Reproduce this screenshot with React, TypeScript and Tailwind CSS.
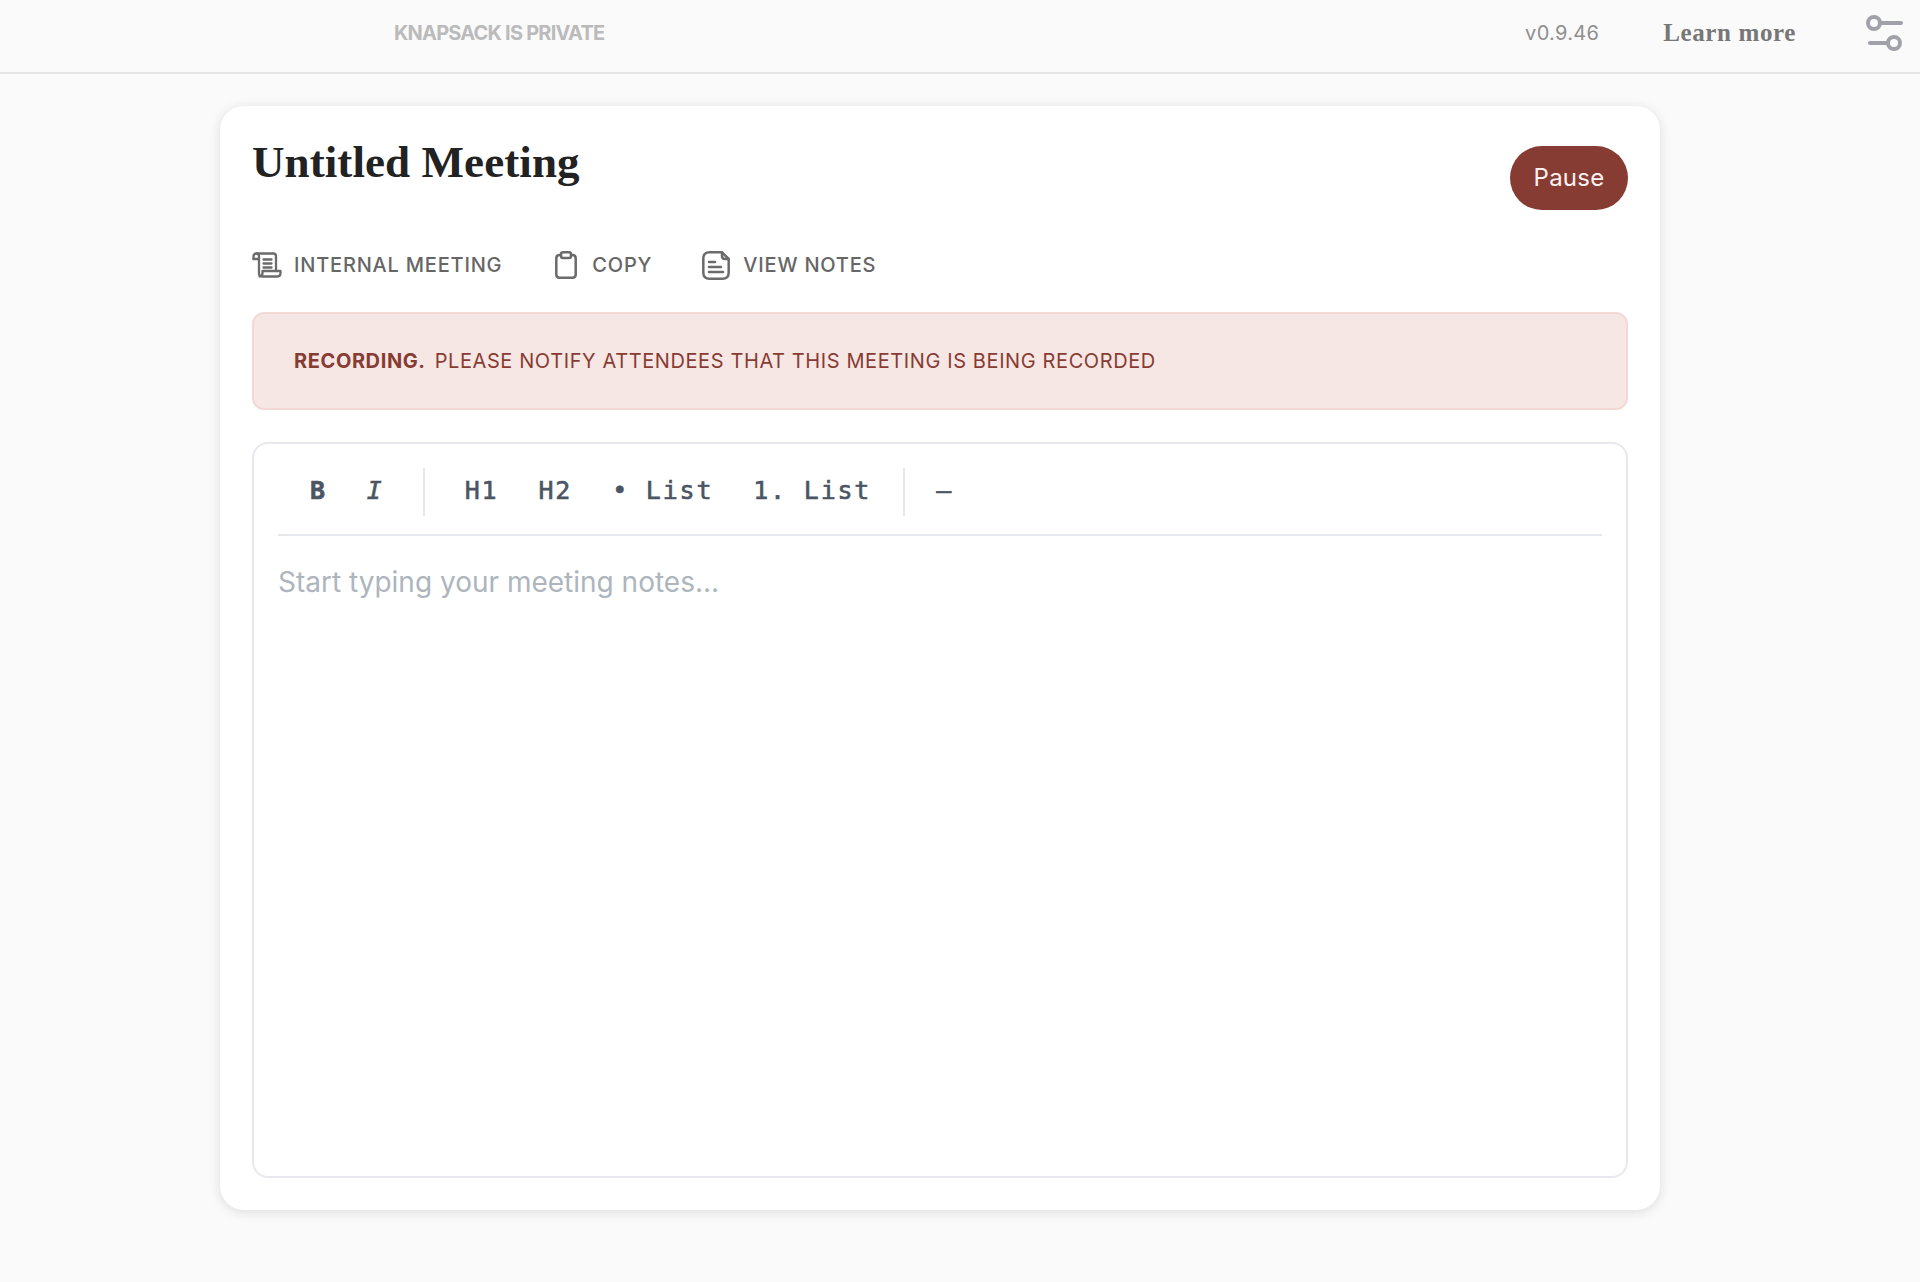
import type { ReactNode } from 'react'

const INTER = "font-['Inter',sans-serif]"

function ScrollIcon() {
  return (
    <svg width="30" height="26" viewBox="0 0 30 26" fill="none" stroke="#6b6b6b" strokeWidth="2.3" strokeLinecap="round" strokeLinejoin="round">
      <path d="M1.500 7V4.500c0-2 1-3 3-3h17c2 0 2.500 1.500 2.500 3v13.500" />
      <path d="M4.500 1.500c1.800 0 2.500 1.200 2.500 3v17c0 2 1.500 3 3.500 3h15c2 0 3-1.500 3-3.500v-2h-18v2c0 2-1 3.500-3 3.500" />
      <path d="M1.500 7h5" />
      <path d="M11.500 7.500h8M11.500 11.500h8M11.500 15.500h8" />
    </svg>
  )
}

function ClipboardIcon() {
  return (
    <svg width="22" height="28" viewBox="0 0 22 28" fill="none" stroke="#6b6b6b" strokeWidth="2.5" strokeLinecap="round" strokeLinejoin="round">
      <path d="M6 4H4.500C2.500 4 1.300 5.300 1.300 7.500v16c0 2 1.200 3.200 3.200 3.200h13c2 0 3.200-1.200 3.200-3.200v-16c0-2.200-1.200-3.500-3.200-3.500H16" />
      <rect x="6" y="1.300" width="10" height="5.700" rx="2" />
    </svg>
  )
}

function NoteIcon() {
  return (
    <svg width="28" height="29" viewBox="0 0 28 29" fill="none" stroke="#6b6b6b" strokeWidth="2.5" strokeLinecap="round" strokeLinejoin="round">
      <path d="M20 1.300H7.500C3.500 1.300 1.300 3.500 1.300 7.500v14c0 4 2.200 6.200 6.200 6.200h13c4 0 6.200-2.200 6.200-6.200V8z" />
      <path d="M20 1.300v3.700c0 2 1 3 3 3h3.700" />
      <path d="M7 11h6M7 16h12M7 21h14" />
    </svg>
  )
}

function SettingsIcon() {
  return (
    <svg width="38" height="38" viewBox="0 0 38 38" fill="none" stroke="#a1a1aa" strokeWidth="4" strokeLinecap="round">
      <circle cx="9" cy="9" r="6" />
      <path d="M15 9h21" />
      <circle cx="29" cy="29" r="6" />
      <path d="M23 29H5" />
    </svg>
  )
}

function MetaItem({ icon, label, textGap = 'gap-[12px]' }: { icon: ReactNode; label: string; textGap?: string }) {
  return (
    <div className={`flex items-center ${textGap}`}>
      <span className="flex w-[30px] justify-center">{icon}</span>
      <span className="text-[20px] leading-[28px] font-medium tracking-[0.04em] text-[#666666]">{label}</span>
    </div>
  )
}

function ToolButton({ label, className }: { label: string; className?: string }) {
  return <span className={`px-[20px] text-[#4b5563] ${className ?? ''}`}>{label}</span>
}

export default function App() {
  return (
    <div className={`min-h-[1282px] bg-[#fafafa] ${INTER}`}>
      <header className="flex h-[74px] items-center border-b-2 border-[#e5e5e5] pr-[17px] pb-[6px] pl-[394px]">
        <span className="text-[20px] font-bold tracking-[-0.04em] text-[#bbbbbb]">KNAPSACK IS PRIVATE</span>
        <span className="ml-auto text-[20px] tracking-[0.015em] text-[#8f8f8f]">v0.9.46</span>
        <span className="ml-[64px] font-['Liberation_Serif',serif] text-[25px] font-bold tracking-[0.025em] text-[#777777]">Learn more</span>
        <span className="ml-[69px] flex"><SettingsIcon /></span>
      </header>

      <main className="mt-[32px] ml-[220px] flex h-[1104px] w-[1440px] flex-col rounded-[24px] bg-white px-[32px] pt-[33px] pb-[32px] shadow-[0_2px_12px_rgba(0,0,0,0.12)]">
        <div className="flex items-start justify-between">
          <h1 className="-mt-[1px] font-['Liberation_Serif',serif] text-[45px] leading-[48px] font-bold tracking-[0.002em] text-[#222222]">Untitled Meeting</h1>
          <button className="mt-[7px] h-[64px] w-[118px] rounded-full bg-[#873c33] text-[24px] tracking-[0.01em] text-[#fdf2f0]">Pause</button>
        </div>

        <div className="mt-[40px] flex h-[30px] items-center gap-[49px]">
          <MetaItem icon={<ScrollIcon />} label="INTERNAL MEETING" />
          <MetaItem icon={<ClipboardIcon />} label="COPY" textGap="gap-[11px]" />
          <MetaItem icon={<NoteIcon />} label="VIEW NOTES" />
        </div>

        <div className="mt-[32px] flex h-[98px] items-center rounded-[12px] border-2 border-[#f3d9d6] bg-[#f7e7e4] px-[40px] text-[20px] tracking-[0.03em] text-[#873c33]">
          <span className="font-bold">RECORDING.</span>
          <span className="ml-[9px]">PLEASE NOTIFY ATTENDEES THAT THIS MEETING IS BEING RECORDED</span>
        </div>

        <div className="mt-[32px] flex flex-1 flex-col rounded-[16px] border-2 border-[#e8e8ed] px-[24px] pt-[24px]">
          <div className="flex h-[68px] items-start border-b-2 border-[#e5e7eb] pb-[20px]">
            <div className="flex h-[48px] w-full items-center font-['DejaVu_Sans_Mono',monospace] text-[25px] tracking-[1.8px] [-webkit-text-stroke:0.6px_#4b5563]">
              <div className="flex h-[48px] items-center border-r-2 border-[#e5e7eb] pr-[19px] pb-[2px] pl-[12px]">
                <ToolButton label="B" className="font-bold" />
                <ToolButton label="I" className="italic" />
              </div>
              <div className="flex h-[48px] items-center border-r-2 border-[#e5e7eb] pr-[12px] pb-[2px] pl-[20px]">
                <ToolButton label="H1" />
                <ToolButton label="H2" />
                <ToolButton label="• List" />
                <ToolButton label="1. List" />
              </div>
              <div className="flex h-[48px] items-center pb-[2px] pl-[11px]">
                <ToolButton label="—" />
              </div>
            </div>
          </div>
          <p className="mt-[26px] text-[28px] leading-[40px] text-[#adb5bd]">Start typing your meeting notes...</p>
        </div>
      </main>
    </div>
  )
}
